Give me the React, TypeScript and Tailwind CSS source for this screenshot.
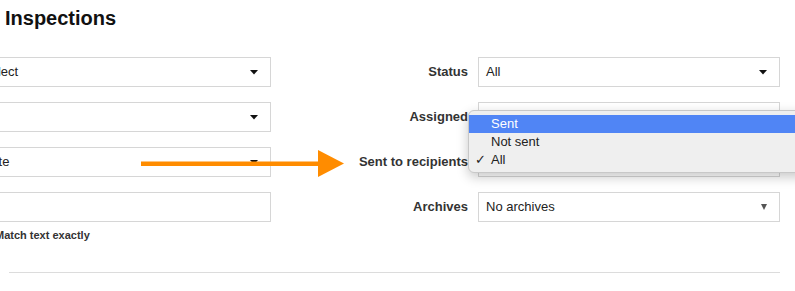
import React from "react";

function Caret() {
  return (
    <svg width="8" height="5" viewBox="0 0 8 5" className="shrink-0">
      <polygon points="0,0 8,0 4,4.5" fill="#111" />
    </svg>
  );
}

function SmallCaret() {
  return (
    <svg width="6" height="6" viewBox="0 0 6 6" className="shrink-0">
      <polygon points="0,0 6,0 3,6" fill="#555" />
    </svg>
  );
}

function Select({ value, small }: { value: string; small?: boolean }) {
  return (
    <div className="h-[30px] border border-[#d6d6d6] bg-white flex items-center justify-between pl-[7px] pr-[12px] text-[13px] text-[#222]">
      <span className="whitespace-nowrap">{value}</span>
      {small ? <SmallCaret /> : <Caret />}
    </div>
  );
}

function Row({ label, children }: { label: string; children: React.ReactNode }) {
  return (
    <div className="flex items-center h-[30px]">
      <div className="w-[197px] text-right text-[13px] font-bold text-[#333] whitespace-nowrap">{label}</div>
      <div className="ml-[10px] w-[302px]">{children}</div>
    </div>
  );
}

export default function App() {
  return (
    <div
      className="relative w-[795px] h-[291px] overflow-hidden bg-white text-[#333]"
      style={{ fontFamily: '"Liberation Sans", Arial, Helvetica, sans-serif' }}
    >
      <h1 className="pl-[5px] pt-[6px] text-[20px] leading-[24px] font-bold text-[#111]">Inspections</h1>

      <div className="mt-[27px] flex">
        <div className="ml-[-26px] w-[297px] flex flex-col gap-[15px]">
          <Select value="Select" />
          <Select value="" />
          <Select value="Date" />
          <div className="h-[30px] border border-[#d6d6d6] bg-white" />
        </div>
        <div className="flex flex-col gap-[15px]">
          <Row label="Status">
            <Select value="All" />
          </Row>
          <Row label="Assigned">
            <Select value="Anyone" />
          </Row>
          <Row label="Sent to recipients">
            <Select value="All" />
          </Row>
          <Row label="Archives">
            <Select value="No archives" small />
          </Row>
        </div>
      </div>

      <div className="ml-[-5px] mt-[6px] text-[11px] leading-[14px] font-bold text-[#333] whitespace-nowrap">
        Match text exactly
      </div>

      <div className="ml-[9px] mt-[30px] w-[771px] h-px bg-[#dcdcdc]" />

      {/* orange annotation arrow */}
      <svg className="absolute left-[141px] top-[150px]" width="203" height="27" viewBox="0 0 203 27">
        <rect x="0" y="11.5" width="180" height="4.5" fill="#ff8c00" />
        <polygon points="177,0 203,13.5 177,27" fill="#ff8c00" />
      </svg>

      {/* open native dropdown menu */}
      <div className="absolute left-[468px] top-[110px] w-[340px] h-[63px] rounded-[6px] bg-[#efefef] border border-[#c8c8c8] shadow-[0_4px_12px_rgba(0,0,0,0.22)] pt-[4px] text-[13px] leading-[18px] text-[#222]">
        <div className="h-[18px] bg-[#5085f5] text-white pl-[22px]">Sent</div>
        <div className="h-[18px] pl-[22px]">Not sent</div>
        <div className="relative h-[18px] pl-[22px]">
          <span className="absolute left-[6px] top-0">✓</span>
          All
        </div>
      </div>
    </div>
  );
}
